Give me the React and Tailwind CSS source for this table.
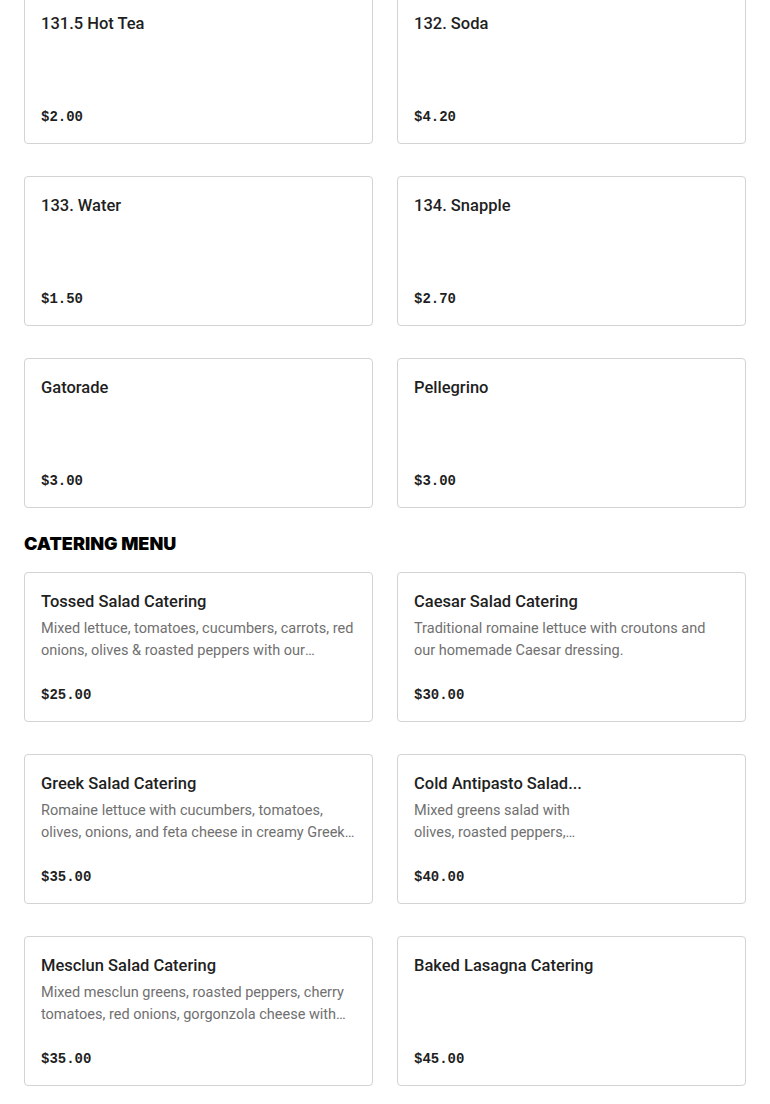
const drinks = [
  { name: '131.5 Hot Tea', price: '$2.00' },
  { name: '132. Soda', price: '$4.20' },
  { name: '133. Water', price: '$1.50' },
  { name: '134. Snapple', price: '$2.70' },
  { name: 'Gatorade', price: '$3.00' },
  { name: 'Pellegrino', price: '$3.00' },
]

const catering = [
  {
    name: 'Tossed Salad Catering',
    desc: 'Mixed lettuce, tomatoes, cucumbers, carrots, red onions, olives & roasted peppers with our homemade Italian dressing.',
    price: '$25.00',
  },
  {
    name: 'Caesar Salad Catering',
    desc: 'Traditional romaine lettuce with croutons and our homemade Caesar dressing.',
    price: '$30.00',
  },
  {
    name: 'Greek Salad Catering',
    desc: 'Romaine lettuce with cucumbers, tomatoes, olives, onions, and feta cheese in creamy Greek dressing.',
    price: '$35.00',
  },
  {
    // title gets cut short in the narrow layout
    name: 'Cold Antipasto Salad...',
    desc: 'Mixed greens salad with olives, roasted peppers, provolone, salami and ham.',
    price: '$40.00',
    narrow: true,
  },
  {
    name: 'Mesclun Salad Catering',
    desc: 'Mixed mesclun greens, roasted peppers, cherry tomatoes, red onions, gorgonzola cheese with balsamic vinaigrette.',
    price: '$35.00',
  },
  { name: 'Baked Lasagna Catering', price: '$45.00' },
]

function Card({ item }) {
  return (
    <div className="h-[150px] flex flex-col border border-[#d3d3d3] rounded-[4px] bg-white px-4 pt-[17px] pb-[14px]">
      <div className={item.narrow ? 'w-[185px]' : ''}>
        <h3 className="text-[16.5px] leading-6 font-medium text-[#1f1f1f] truncate">{item.name}</h3>
        {item.desc && (
          <p className="mt-1 text-[14.5px] leading-[22px] text-[#707070] line-clamp-2">{item.desc}</p>
        )}
      </div>
      <div className="mt-auto text-[14px] leading-6 font-bold text-[#1f1f1f] font-['Liberation_Mono',monospace]">
        {item.price}
      </div>
    </div>
  )
}

export default function App() {
  return (
    <div className="bg-white min-h-screen px-6 font-['Roboto',sans-serif] overflow-hidden">
      <div className="-mt-[6px] grid grid-cols-2 gap-x-6 gap-y-8">
        {drinks.map((d) => (
          <Card key={d.name} item={d} />
        ))}
      </div>
      <h2 className="mt-[24px] mb-[16px] text-[18px] leading-6 font-black text-black uppercase font-['Inter',sans-serif]">
        Catering Menu
      </h2>
      <div className="grid grid-cols-2 gap-x-6 gap-y-8 pb-8">
        {catering.map((d) => (
          <Card key={d.name} item={d} />
        ))}
      </div>
    </div>
  )
}
